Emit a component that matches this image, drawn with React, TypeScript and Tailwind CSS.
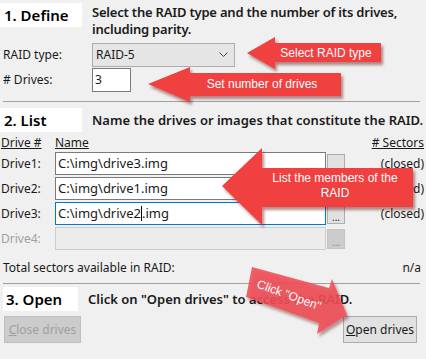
import React from 'react'

const drives = [
  { label: 'Drive1:', path: 'C:\\img\\drive3.img', status: '(closed)' },
  { label: 'Drive2:', path: 'C:\\img\\drive1.img', status: '(closed)' },
  { label: 'Drive3:', path: 'C:\\img\\drive2.img', status: '(closed)', focused: true },
]

function Heading({ children, className = '' }: { children: React.ReactNode; className?: string }) {
  return (
    <div className={`h-[24px] bg-white text-[15px] font-semibold leading-[24px] text-black ${className}`}>
      {children}
    </div>
  )
}

function DriveRow({ label, path, status, focused }: { label: string; path: string; status: string; focused?: boolean }) {
  // caret sits after "drive2" in the focused field
  const cut = focused ? path.indexOf('.img') : -1
  return (
    <div className="flex h-[23px] items-center">
      <div className="w-[55px] pl-[1px]">{label}</div>
      <div
        className={`flex h-[23px] w-[271px] items-center border bg-white pl-[2px] text-[13px] ${
          focused ? 'border-[#0078d7]' : 'border-[#7a7a7a]'
        }`}
      >
        {cut >= 0 ? (
          <>
            {path.slice(0, cut)}
            <span className="inline-block h-[15px] w-px bg-black" />
            {path.slice(cut)}
          </>
        ) : (
          path
        )}
      </div>
      <div className="ml-[1px] flex h-[20px] w-[18px] items-end justify-center border border-[#adadad] bg-[#e1e1e1] text-[10px] leading-[12px]">
        ...
      </div>
      <div className="flex-1 pr-[2px] text-right">{status}</div>
    </div>
  )
}

function Arrows() {
  return (
    <svg className="pointer-events-none absolute left-0 top-0" width="426" height="359" viewBox="0 0 426 359">
      <defs>
        <filter id="sh" x="-20%" y="-20%" width="140%" height="160%">
          <feDropShadow dx="2" dy="3" stdDeviation="1.5" floodColor="#5a0000" floodOpacity="0.45" />
        </filter>
      </defs>
      <g fill="#f1403f" filter="url(#sh)">
        <polygon points="247,53 275,37 275,43 381,43 381,62 275,62 275,69" />
        <polygon points="148,84 190,67 190,73 341,73 341,96 190,96 190,102" />
        <polygon points="222,186 262,148 262,168 413,168 413,207 262,207 262,225" />
      </g>
      <g fill="#f04f55" fillOpacity="0.88" filter="url(#sh)">
        <polygon points="252,267 329,288 332,279 347,315 317,334 319,323 246,297" />
      </g>
      <g fill="#fff" fontFamily="'Liberation Sans', Arial, sans-serif" fontSize="12">
        <text x="326" y="57" textAnchor="middle">Select RAID type</text>
        <text x="262" y="88" textAnchor="middle">Set number of drives</text>
        <text x="335" y="182" textAnchor="middle">List the members of the</text>
        <text x="335" y="197" textAnchor="middle">RAID</text>
        <text x="289" y="299" textAnchor="middle" transform="rotate(20 289 295)">Click "Open"</text>
      </g>
    </svg>
  )
}

export default function App() {
  return (
    <div className="relative h-[359px] w-[426px] overflow-hidden bg-[#f0f0f0] font-['Noto_Sans',sans-serif] text-[12px] text-[#1a1a1a]">
      {/* 1. Define */}
      <div className="flex h-[40px] pt-[3px]">
        <Heading className="w-[82px] pl-[4px]">1. Define</Heading>
        <div className="ml-[10px] mt-[1px] w-[325px] text-[13px] font-semibold leading-[17px] tracking-[-0.2px]">
          Select the RAID type and the number of its drives, including parity.
        </div>
      </div>
      <div className="mt-[3px] flex h-[24px] items-center">
        <div className="w-[92px] pl-[3px]">RAID type:</div>
        <div className="flex h-[24px] w-[143px] items-center justify-between border border-[#adadad] bg-[#e5e5e5] pl-[3px] pr-[6px]">
          <span>RAID-5</span>
          <svg width="9" height="6" viewBox="0 0 9 6">
            <polyline points="0.5,0.5 4.5,4.5 8.5,0.5" fill="none" stroke="#444" strokeWidth="1" />
          </svg>
        </div>
      </div>
      <div className="mt-[1px] flex h-[24px] items-center">
        <div className="w-[92px] pl-[3px]">#&nbsp;Drives:</div>
        <div className="flex h-[24px] w-[39px] items-center border border-[#7a7a7a] bg-white pl-[2px]">3</div>
      </div>
      <div className="ml-[3px] mt-[9px] h-px w-[417px] bg-[#a0a0a0]" />

      {/* 2. List */}
      <div className="mt-[6px] flex h-[24px] items-center">
        <Heading className="w-[82px] pl-[4px]">2. List</Heading>
        <div className="ml-[10px] pt-[2px] text-[13px] font-semibold">
          Name the drives or images that constitute the RAID.
        </div>
      </div>
      <div className="mt-[3px] flex h-[15px] items-center">
        <div className="w-[55px] pl-[1px] underline">Drive #</div>
        <div className="underline">Name</div>
        <div className="ml-auto pr-[2px] underline">#&nbsp;Sectors</div>
      </div>
      <div className="mt-[2px] flex flex-col gap-[2px]">
        {drives.map((d) => (
          <DriveRow key={d.label} {...d} />
        ))}
        <div className="flex h-[23px] items-center">
          <div className="w-[55px] pl-[1px] text-[#a0a0a0]">Drive4:</div>
          <div className="h-[23px] w-[271px] border border-[#cccccc] bg-[#ececec]" />
          <div className="ml-[1px] flex h-[20px] w-[18px] items-end justify-center border border-[#c4c4c4] bg-[#cccccc] text-[10px] leading-[12px] text-[#8a8a8a]">
            ...
          </div>
        </div>
      </div>
      <div className="mt-[10px] flex h-[16px] items-center">
        <div className="pl-[3px]">Total sectors available in RAID:</div>
        <div className="ml-auto pr-[5px]">n/a</div>
      </div>
      <div className="ml-[3px] mt-[7px] h-px w-[417px] bg-[#a0a0a0]" />

      {/* 3. Open */}
      <div className="mt-[3px] flex h-[24px] items-center">
        <Heading className="ml-[3px] w-[75px] pl-[3px]">3. Open</Heading>
        <div className="ml-[10px] pt-[2px] text-[13px] font-semibold">
          Click on "Open drives" to access the RAID.
        </div>
      </div>
      <div className="mt-[5px] flex h-[27px] items-center">
        <div className="ml-[4px] flex h-[27px] w-[77px] items-center justify-center border border-[#bfbfbf] bg-[#cccccc] text-[#a0a0a0]">
          <span className="underline">C</span>lose drives
        </div>
        <div className="ml-auto mr-[9px] flex h-[27px] w-[74px] items-center justify-center border border-[#adadad] bg-[#e1e1e1]">
          <span className="underline">O</span>pen drives
        </div>
      </div>

      <Arrows />
    </div>
  )
}
